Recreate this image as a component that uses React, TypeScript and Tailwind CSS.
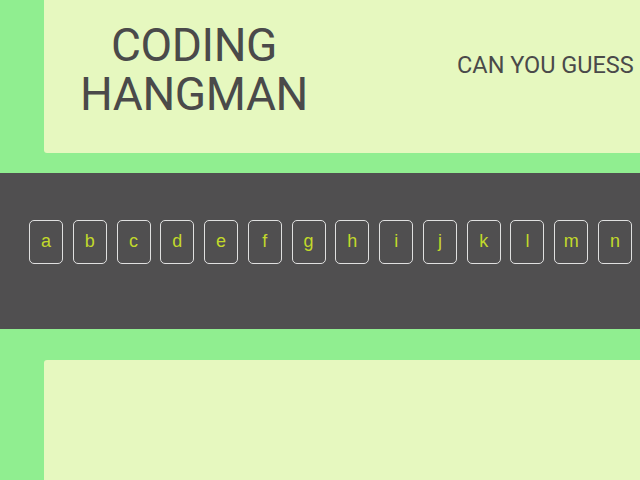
import React from "react";

// only the keys that fit in the view
const letters = "abcdefghijklmn".split("");

export default function App() {
  return (
    <div className="h-[480px] w-[640px] overflow-hidden bg-[#90ee90] font-['Roboto',sans-serif]">
      {/* Header panel */}
      <header className="ml-[44px] flex h-[153px] w-[640px] rounded-bl-[3px] bg-[#e6f8bf] text-[#4a4a4a]">
        <div className="w-[300px] shrink-0 pt-[21px] text-center">
          <h1 className="text-[46px] leading-[49px] tracking-[-0.4px]">
            CODING
            <br />
            HANGMAN
          </h1>
        </div>
        <div className="pl-[113px] pt-[54px]">
          <p className="whitespace-nowrap text-[23.5px] leading-[23px]">CAN YOU GUESS</p>
        </div>
      </header>

      {/* Letter keys */}
      <section className="mt-5 h-[156px] overflow-hidden bg-[#504f50] pl-[29px] pt-[47px]">
        <div className="flex gap-[9.77px]">
          {letters.map((l) => (
            <button
              key={l}
              className="flex h-[44px] w-[34px] shrink-0 items-center justify-center rounded-[5px] border border-[#e0e0e0] pb-[1px] font-['Liberation_Sans',sans-serif] text-[18px] text-[#c2d92b]"
            >
              {l}
            </button>
          ))}
        </div>
      </section>

      {/* Word panel */}
      <div className="ml-[44px] mt-[31px] h-[200px] rounded-tl-[3px] bg-[#e6f8bf]"></div>
    </div>
  );
}
